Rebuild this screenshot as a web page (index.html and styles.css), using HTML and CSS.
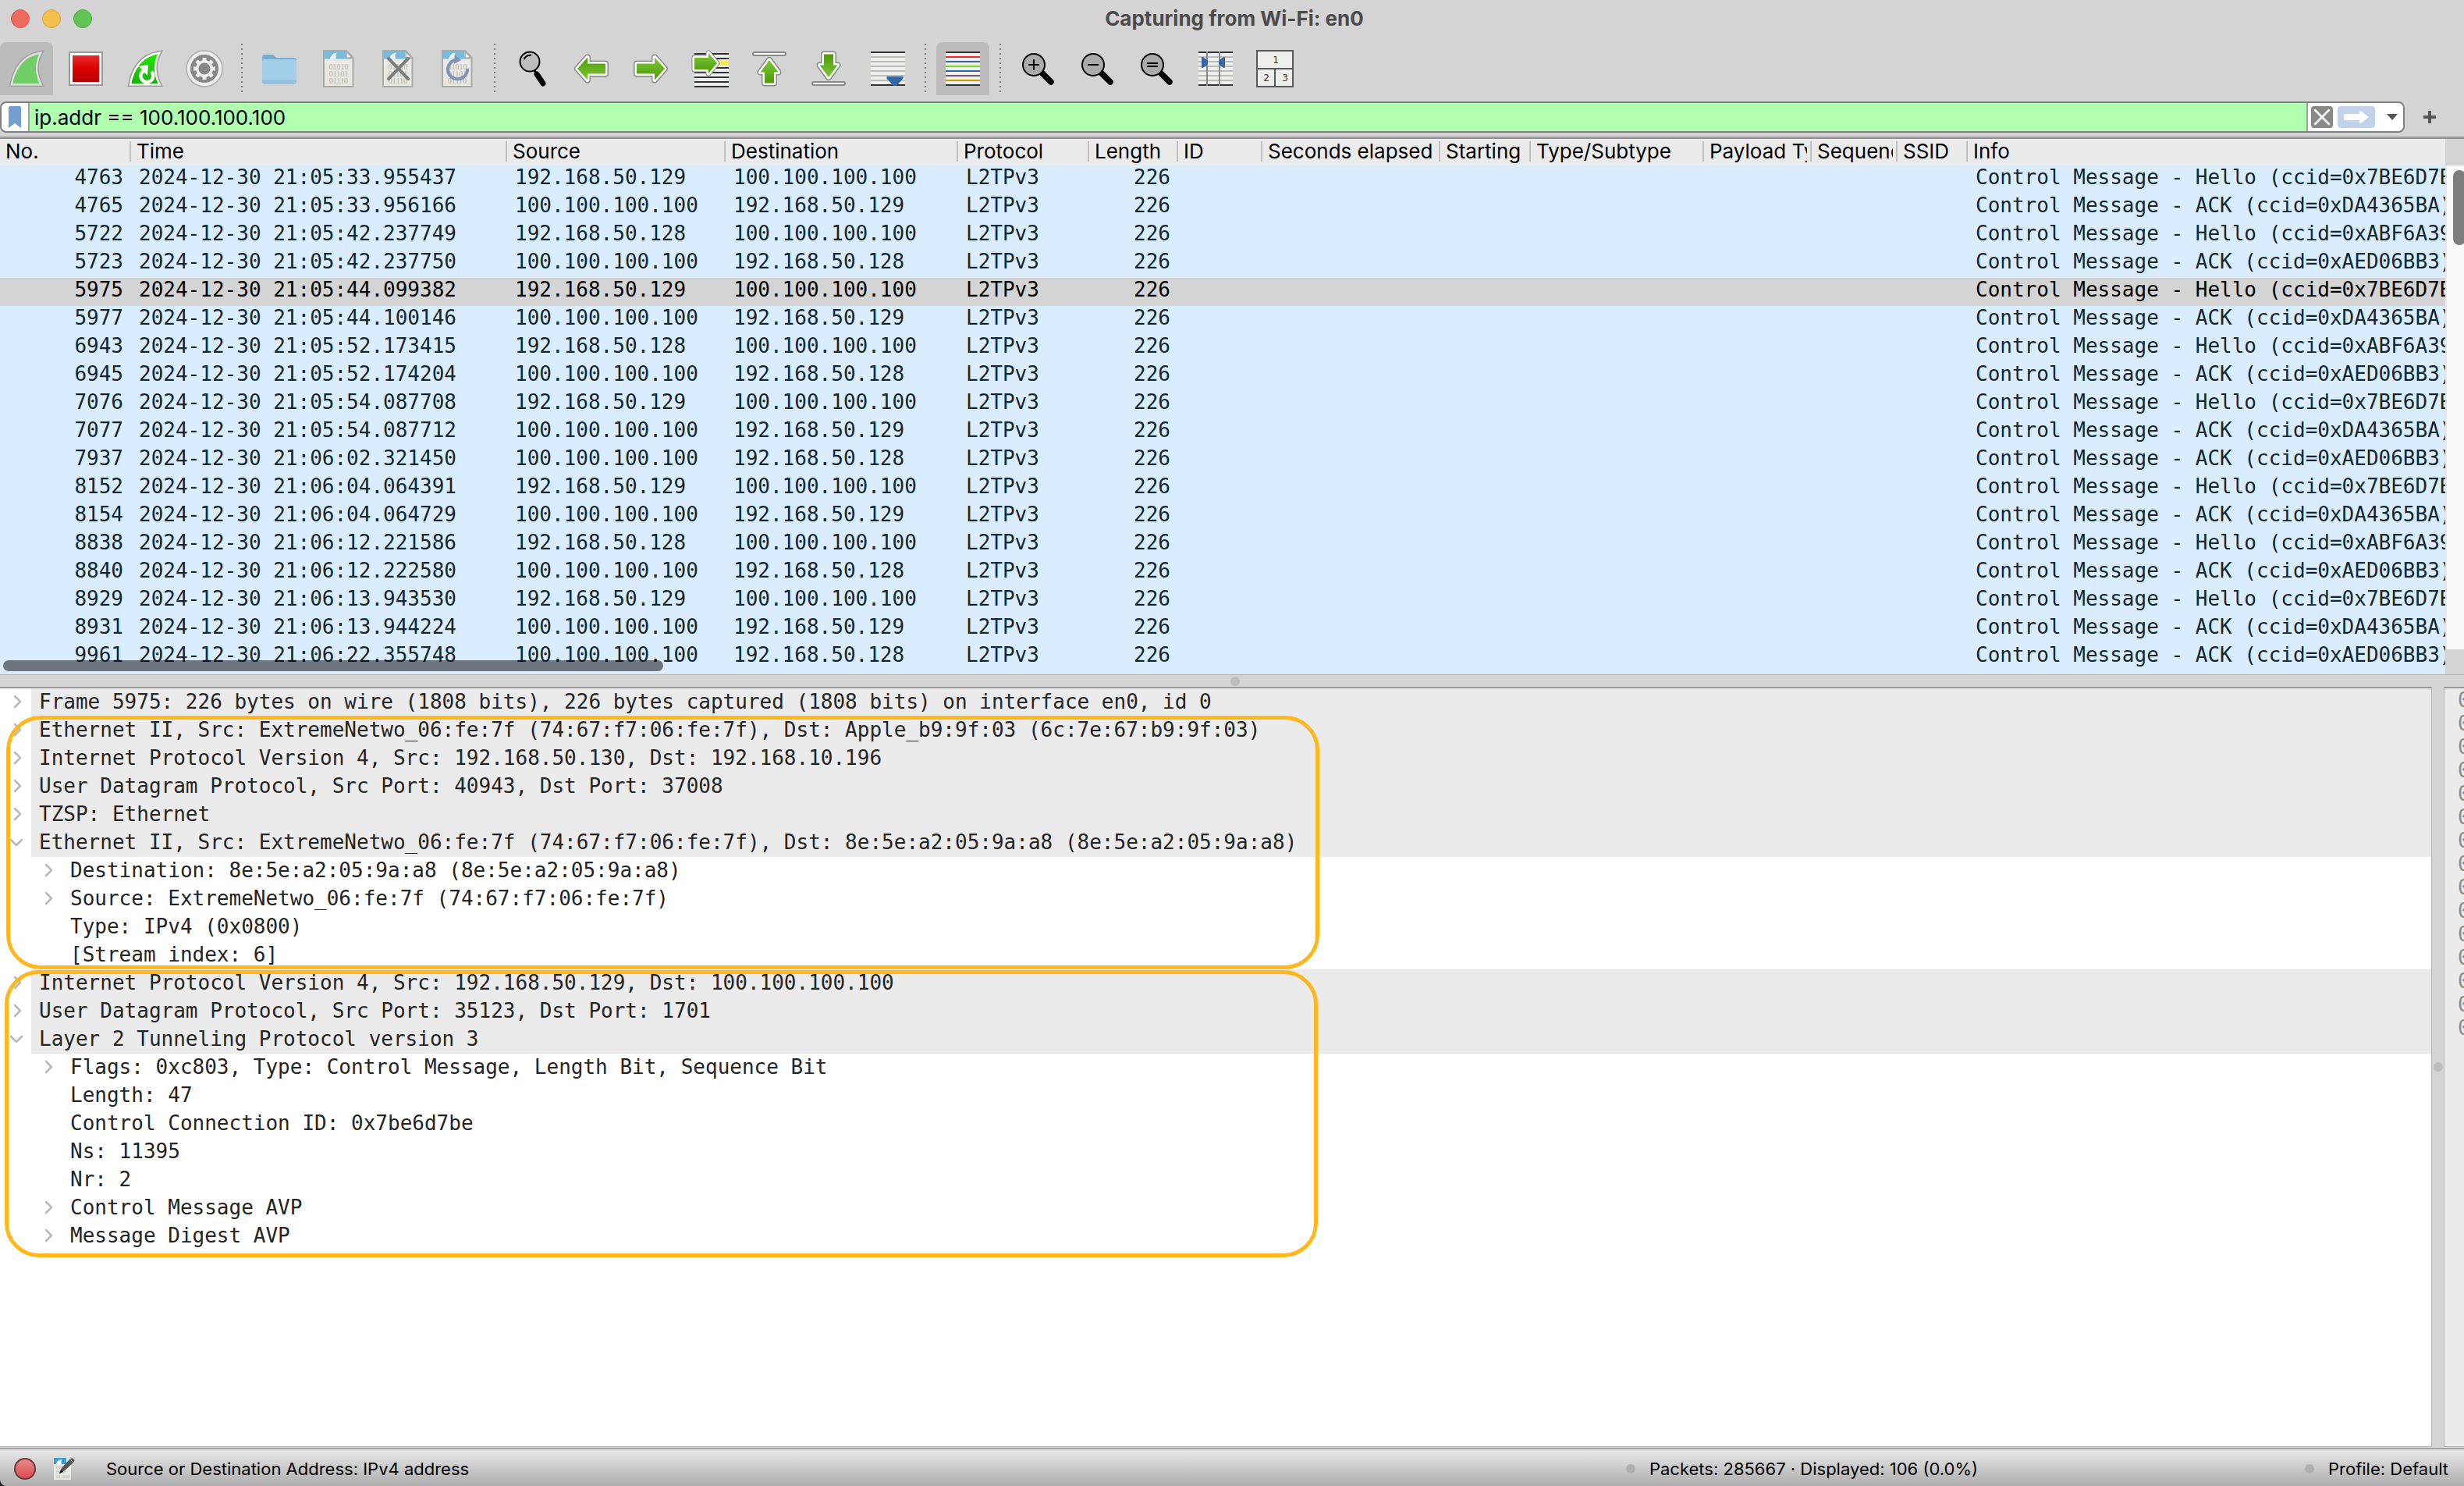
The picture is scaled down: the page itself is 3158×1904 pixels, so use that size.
FILE: index.html
```html
<!DOCTYPE html>
<html lang="en">
<head>
  <meta charset="UTF-8" />
  <title>Capturing from Wi-Fi: en0</title>
  <meta name="viewport" content="width=device-width, initial-scale=1.0" />
  <link rel="stylesheet" href="styles.css">
</head>
<body>

<!-- shared icon shapes -->
<svg class="sprite" aria-hidden="true">
  <defs>
    <linearGradient id="green" x1="0" y1="0" x2="0" y2="1">
      <stop offset="0" stop-color="#7cc83a" />
      <stop offset="1" stop-color="#4e9a06" />
    </linearGradient>
    <linearGradient id="red" x1="0" y1="0" x2="0" y2="1">
      <stop offset="0" stop-color="#e52a2a" />
      <stop offset="0.5" stop-color="#dc0000" />
      <stop offset="1" stop-color="#b60000" />
    </linearGradient>
    <linearGradient id="fin" x1="0" y1="0" x2="0" y2="1">
      <stop offset="0" stop-color="#22e600" />
      <stop offset="1" stop-color="#14b400" />
    </linearGradient>
    <linearGradient id="paper" x1="0" y1="0" x2="0" y2="1">
      <stop offset="0" stop-color="#ececec" />
      <stop offset="1" stop-color="#e6e6da" />
    </linearGradient>
  </defs>
  <symbol id="i-file" viewBox="0 0 48 48">
    <path d="M5 1H34L42.500 10V47H5Z" fill="url(#paper)" stroke="#a9aba7" stroke-width="2" />
    <path d="M6 2H33V10H41V11.500H6Z" fill="#79b9d9" />
    <path d="M13 11.500C14 7 17 4 22 3.500C20 6 20 9 21 11.500Z" fill="#eef3f5" />
    <path d="M34 2V10H41.500Z" fill="#f4f4f2" stroke="#a9aba7" stroke-width="1.500" />
    <g fill="#b3b3ae" font-family="Liberation Serif, serif" font-size="10" text-anchor="middle">
      <text x="24" y="25">01010</text>
      <text x="24" y="34">01101</text>
      <text x="24" y="43">01110</text>
    </g>
  </symbol>
  <symbol id="i-arrow" viewBox="0 0 48 48">
    <g stroke-linejoin="round">
      <path d="M42 24L29 9.500V17.500H6V30.500H29V38.500Z" fill="none" stroke="#888a85" stroke-width="8" />
      <path d="M42 24L29 9.500V17.500H6V30.500H29V38.500Z" fill="none" stroke="#fff" stroke-width="5" />
    </g>
    <path d="M42 24L29 9.500V17.500H6V30.500H29V38.500Z" fill="url(#green)" />
  </symbol>
  <symbol id="i-updown" viewBox="0 0 48 48">
    <rect x="3" y="3" width="42" height="4" rx="2" fill="#fff" stroke="#888a85" stroke-width="2" />
    <g stroke-linejoin="round">
      <path d="M24 13L12.500 28.500H18V42.500H30V28.500H35.500Z" fill="none" stroke="#888a85" stroke-width="8" />
      <path d="M24 13L12.500 28.500H18V42.500H30V28.500H35.500Z" fill="none" stroke="#fff" stroke-width="5" />
    </g>
    <path d="M24 13L12.500 28.500H18V42.500H30V28.500H35.500Z" fill="url(#green)" />
  </symbol>
  <symbol id="i-lens" viewBox="0 0 48 48">
    <path d="M30 30L41 41" stroke="#000" stroke-width="7.500" stroke-linecap="round" />
    <circle cx="19" cy="19" r="14" fill="#ababab" stroke="#000" stroke-width="2" />
  </symbol>
  <symbol id="i-closed" viewBox="0 0 18 18">
    <path d="M6 2L13 9L6 16" fill="none" stroke="#b9b9b9" stroke-width="2.500" stroke-linecap="round" stroke-linejoin="round" />
  </symbol>
  <symbol id="i-open" viewBox="0 0 18 18">
    <path d="M1 6L8 13L15 6" fill="none" stroke="#b9b9b9" stroke-width="2.500" stroke-linecap="round" stroke-linejoin="round" />
  </symbol>
</svg>

<header class="titlebar">
  <div class="lights">
    <button class="light light-close" aria-label="Close"></button>
    <button class="light light-min" aria-label="Minimize"></button>
    <button class="light light-max" aria-label="Zoom"></button>
  </div>
  <h1>Capturing from Wi-Fi: en0</h1>
</header>

<nav class="toolbar">
  <button class="tool pressed" aria-label="Start capture">
    <svg viewBox="0 0 48 48">
      <path d="M6.500 43C10 25 20 9 40 5.500C34 18 35 31 40.500 43Z" fill="none" stroke="#a0a0a0" stroke-width="8" />
      <path d="M6.500 43C10 25 20 9 40 5.500C34 18 35 31 40.500 43Z" fill="#6fcf66" stroke="#dedede" stroke-width="5" />
      <path d="M6.500 43C10 25 20 9 40 5.500C34 18 35 31 40.500 43Z" fill="#6fcf66" />
    </svg>
  </button>
  <button class="tool" aria-label="Stop capture">
    <svg viewBox="0 0 48 48">
      <rect x="3" y="3" width="42" height="42" fill="#fff" stroke="#999" stroke-width="2" />
      <rect x="7" y="7" width="34" height="34" fill="url(#red)" />
    </svg>
  </button>
  <button class="tool" aria-label="Restart capture">
    <svg viewBox="0 0 48 48">
      <path d="M6.500 43C10 25 20 9 40 5.500C34 18 35 31 40.500 43Z" fill="none" stroke="#999" stroke-width="8" />
      <path d="M6.500 43C10 25 20 9 40 5.500C34 18 35 31 40.500 43Z" fill="none" stroke="#fff" stroke-width="5" />
      <path d="M6.500 43C10 25 20 9 40 5.500C34 18 35 31 40.500 43Z" fill="url(#fin)" />
      <path d="M19.500 29A8 8 0 1 0 32 27.500" fill="none" stroke="#fff" stroke-width="4.500" />
      <path d="M15 21L28 19L27 33L23.500 29L19 32L17 29L20 25Z" fill="#fff" />
    </svg>
  </button>
  <button class="tool" aria-label="Capture options">
    <svg viewBox="0 0 48 48">
      <circle cx="24" cy="24" r="23" fill="#ededed" stroke="#acacac" stroke-width="1.500" />
      <circle cx="24" cy="24" r="18" fill="#868686" />
      <circle cx="24" cy="24" r="11" fill="#ededed" />
      <g stroke="#ededed" stroke-width="5">
        <path d="M24 10V38M10 24H38M14 14L34 34M34 14L14 34" />
      </g>
      <circle cx="24" cy="24" r="7.500" fill="#868686" />
    </svg>
  </button>
  <span class="sep"></span>
  <button class="tool" aria-label="Open file">
    <svg viewBox="0 0 48 48">
      <path d="M2 9Q2 6 5 6H15Q17 6 18.500 8.500L20 10H43Q46 10 46 13V20H2Z" fill="#74add0" />
      <path d="M2 14Q2 12 4 12H44Q46 12 46 14V41Q46 44 43 44H5Q2 44 2 41Z" fill="#a3d0e8" />
      <path d="M2 38V41Q2 44 5 44H43Q46 44 46 41V38Z" fill="#93c3de" />
    </svg>
  </button>
  <button class="tool" aria-label="Save file">
    <svg><use href="#i-file" /></svg>
  </button>
  <button class="tool" aria-label="Close file">
    <svg viewBox="0 0 48 48">
      <use href="#i-file" />
      <path d="M12 11L37 37M37 11L12 37" stroke="#7b7d7b" stroke-width="4" stroke-linecap="round" />
    </svg>
  </button>
  <button class="tool" aria-label="Reload file">
    <svg viewBox="0 0 48 48">
      <use href="#i-file" />
      <path d="M23 12.500A12.500 12.500 0 1 0 37 24" fill="none" stroke="#7f93b8" stroke-width="4" />
      <path d="M21 7L29 13L20 18Z" fill="#7f93b8" />
    </svg>
  </button>
  <span class="sep"></span>
  <button class="tool" aria-label="Find packet">
    <svg viewBox="0 0 48 48">
      <path d="M30 31L38 43" stroke="#000" stroke-width="7" stroke-linecap="round" />
      <path d="M26 25L30 31" stroke="#000" stroke-width="3" />
      <circle cx="21" cy="15" r="12.500" fill="#bdbdbd" stroke="#000" stroke-width="2" />
      <path d="M13.500 12Q16 6.500 23 6.500" fill="none" stroke="#000" stroke-width="2" />
    </svg>
  </button>
  <button class="tool" aria-label="Go back">
    <svg viewBox="0 0 48 48"><use href="#i-arrow" transform="rotate(180 24 24)" /></svg>
  </button>
  <button class="tool" aria-label="Go forward">
    <svg><use href="#i-arrow" /></svg>
  </button>
  <button class="tool" aria-label="Go to packet">
    <svg viewBox="0 0 48 48">
      <rect x="4" y="4" width="44" height="43" fill="#eeeeec" />
      <path d="M4 5H48M4 11H48M4 23H48M4 29H48M4 35H48M4 41H48M4 47H48" stroke="#2e3436" stroke-width="2" />
      <rect x="30" y="14" width="18" height="6" fill="#fce94f" />
      <g stroke-linejoin="round">
        <path d="M33 17L22 4V10H4V25H22V30Z" fill="none" stroke="#888a85" stroke-width="7" />
        <path d="M33 17L22 4V10H4V25H22V30Z" fill="none" stroke="#fff" stroke-width="5" />
      </g>
      <path d="M33 17L22 4V10H4V25H22V30Z" fill="url(#green)" />
    </svg>
  </button>
  <button class="tool" aria-label="Go to first packet">
    <svg><use href="#i-updown" /></svg>
  </button>
  <button class="tool" aria-label="Go to last packet">
    <svg viewBox="0 0 48 48"><use href="#i-updown" transform="rotate(180 24 24)" /></svg>
  </button>
  <button class="tool" aria-label="Auto scroll">
    <svg viewBox="0 0 48 48">
      <rect x="2" y="2" width="44" height="44" fill="#eeeeec" />
      <path d="M2 9H46M2 15H46M2 21H46M2 27H46M2 33H46M2 39H46" stroke="#babdb6" stroke-width="2" />
      <path d="M2 3H46M2 45H46" stroke="#2e3436" stroke-width="2" />
      <path d="M24 34H42Q45 34 43 37L36 45Q33 47 30 45L23 37Q21 34 24 34Z" fill="#3465a4" />
    </svg>
  </button>
  <span class="sep"></span>
  <button class="tool pressed" aria-label="Colorize packets">
    <svg viewBox="0 0 48 48">
      <rect x="2" y="2" width="44" height="44" fill="#eeeeec" />
      <g stroke-width="2">
        <path d="M2 3H46M2 45H46" stroke="#2e3436" />
        <path d="M2 9H46" stroke="#ef2929" />
        <path d="M2 15H46M2 27H46" stroke="#3465a4" />
        <path d="M2 21H46" stroke="#73d216" />
        <path d="M2 33H46" stroke="#75507b" />
        <path d="M2 39H46" stroke="#c4a000" />
      </g>
    </svg>
  </button>
  <span class="sep"></span>
  <button class="tool" aria-label="Zoom in">
    <svg viewBox="0 0 48 48">
      <use href="#i-lens" />
      <path d="M12 19H26M19 12V26" stroke="#000" stroke-width="2" />
    </svg>
  </button>
  <button class="tool" aria-label="Zoom out">
    <svg viewBox="0 0 48 48">
      <use href="#i-lens" />
      <path d="M12 19H26" stroke="#000" stroke-width="2" />
    </svg>
  </button>
  <button class="tool" aria-label="Normal size">
    <svg viewBox="0 0 48 48">
      <use href="#i-lens" />
      <path d="M12 17H26M12 21H26" stroke="#000" stroke-width="2" />
    </svg>
  </button>
  <button class="tool" aria-label="Resize columns">
    <svg viewBox="0 0 48 48">
      <rect x="2" y="2" width="44" height="44" fill="#eeeeec" />
      <path d="M2 9H46M2 15H46M2 21H46M2 27H46M2 33H46M2 39H46" stroke="#babdb6" stroke-width="2" />
      <path d="M2 3H46M2 45H46" stroke="#2e3436" stroke-width="2" />
      <path d="M13 2V46M29 2V46" stroke="#888a85" stroke-width="2" />
      <path d="M6 9Q9 9 14 14V18Q9 23 6 23ZM36 9Q33 9 28 14V18Q33 23 36 23Z" fill="#3465a4" />
    </svg>
  </button>
  <button class="tool" aria-label="Layout">
    <svg viewBox="0 0 48 48">
      <path d="M1 1H47V47H1ZM1 24H47M24 24V47" fill="#eeeeec" stroke="#555a5c" stroke-width="2" />
      <g fill="#2e3436" font-family="DejaVu Sans, sans-serif" font-size="12" text-anchor="middle">
        <text x="25" y="17">1</text>
        <text x="13" y="40">2</text>
        <text x="37" y="40">3</text>
      </g>
    </svg>
  </button>
</nav>

<form class="filterbar">
  <div class="filter">
    <button type="button" class="bookmark" aria-label="Bookmarks">
      <svg viewBox="0 0 16 28"><path d="M0 2Q0 0 2 0H14Q16 0 16 2V28L8 22L0 28Z" fill="#729fcf" /></svg>
    </button>
    <input type="text" class="filter-text" aria-label="Display filter" value="ip.addr == 100.100.100.100">
    <button type="button" class="clear" aria-label="Clear filter">
      <svg viewBox="0 0 28 28"><path d="M5 5L23 23M23 5L5 23" stroke="#fff" stroke-width="2.500" stroke-linecap="round" /></svg>
    </button>
    <button type="submit" class="apply" aria-label="Apply filter">
      <svg viewBox="0 0 48 28"><path d="M9 10H28V7Q29 5 31 7L40 14L31 21Q29 23 28 21V18H9Q8 18 8 17V11Q8 10 9 10Z" fill="#fff" /></svg>
    </button>
    <button type="button" class="history" aria-label="Filter history">
      <svg viewBox="0 0 14 8"><path d="M0 0H14L7 8Z" fill="#555" /></svg>
    </button>
  </div>
  <button type="button" class="add" aria-label="Add filter button">
    <svg viewBox="0 0 16 16"><path d="M8 0V16M0 8H16" stroke="#555" stroke-width="4" /></svg>
  </button>
</form>

<main>
  <section class="packets">
    <div class="packets-view">
      <table>
        <colgroup>
          <col class="c-no"><col class="c-time"><col class="c-src"><col class="c-dst"><col class="c-proto"><col class="c-len"><col class="c-id">
          <col class="c-sec"><col class="c-start"><col class="c-type"><col class="c-pay"><col class="c-seq"><col class="c-ssid"><col>
        </colgroup>
        <thead>
          <tr>
            <th>No.</th><th>Time</th><th>Source</th><th>Destination</th><th>Protocol</th><th>Length</th><th>ID</th>
            <th>Seconds elapsed</th><th>Starting</th><th>Type/Subtype</th><th><div>Payload Ty</div></th><th><div>Sequenc</div></th><th>SSID</th><th>Info</th>
          </tr>
        </thead>
        <tbody>
          <tr><td class="num">4763</td><td>2024-12-30 21:05:33.955437</td><td>192.168.50.129</td><td>100.100.100.100</td><td>L2TPv3</td><td class="num">226</td><td colspan="7"></td><td>Control Message - Hello (ccid=0x7BE6D7BE)</td></tr>
          <tr><td class="num">4765</td><td>2024-12-30 21:05:33.956166</td><td>100.100.100.100</td><td>192.168.50.129</td><td>L2TPv3</td><td class="num">226</td><td colspan="7"></td><td>Control Message - ACK (ccid=0xDA4365BA)</td></tr>
          <tr><td class="num">5722</td><td>2024-12-30 21:05:42.237749</td><td>192.168.50.128</td><td>100.100.100.100</td><td>L2TPv3</td><td class="num">226</td><td colspan="7"></td><td>Control Message - Hello (ccid=0xABF6A39</td></tr>
          <tr><td class="num">5723</td><td>2024-12-30 21:05:42.237750</td><td>100.100.100.100</td><td>192.168.50.128</td><td>L2TPv3</td><td class="num">226</td><td colspan="7"></td><td>Control Message - ACK (ccid=0xAED06BB3)</td></tr>
          <tr class="selected"><td class="num">5975</td><td>2024-12-30 21:05:44.099382</td><td>192.168.50.129</td><td>100.100.100.100</td><td>L2TPv3</td><td class="num">226</td><td colspan="7"></td><td>Control Message - Hello (ccid=0x7BE6D7BE)</td></tr>
          <tr><td class="num">5977</td><td>2024-12-30 21:05:44.100146</td><td>100.100.100.100</td><td>192.168.50.129</td><td>L2TPv3</td><td class="num">226</td><td colspan="7"></td><td>Control Message - ACK (ccid=0xDA4365BA)</td></tr>
          <tr><td class="num">6943</td><td>2024-12-30 21:05:52.173415</td><td>192.168.50.128</td><td>100.100.100.100</td><td>L2TPv3</td><td class="num">226</td><td colspan="7"></td><td>Control Message - Hello (ccid=0xABF6A39</td></tr>
          <tr><td class="num">6945</td><td>2024-12-30 21:05:52.174204</td><td>100.100.100.100</td><td>192.168.50.128</td><td>L2TPv3</td><td class="num">226</td><td colspan="7"></td><td>Control Message - ACK (ccid=0xAED06BB3)</td></tr>
          <tr><td class="num">7076</td><td>2024-12-30 21:05:54.087708</td><td>192.168.50.129</td><td>100.100.100.100</td><td>L2TPv3</td><td class="num">226</td><td colspan="7"></td><td>Control Message - Hello (ccid=0x7BE6D7BE)</td></tr>
          <tr><td class="num">7077</td><td>2024-12-30 21:05:54.087712</td><td>100.100.100.100</td><td>192.168.50.129</td><td>L2TPv3</td><td class="num">226</td><td colspan="7"></td><td>Control Message - ACK (ccid=0xDA4365BA)</td></tr>
          <tr><td class="num">7937</td><td>2024-12-30 21:06:02.321450</td><td>100.100.100.100</td><td>192.168.50.128</td><td>L2TPv3</td><td class="num">226</td><td colspan="7"></td><td>Control Message - ACK (ccid=0xAED06BB3)</td></tr>
          <tr><td class="num">8152</td><td>2024-12-30 21:06:04.064391</td><td>192.168.50.129</td><td>100.100.100.100</td><td>L2TPv3</td><td class="num">226</td><td colspan="7"></td><td>Control Message - Hello (ccid=0x7BE6D7BE)</td></tr>
          <tr><td class="num">8154</td><td>2024-12-30 21:06:04.064729</td><td>100.100.100.100</td><td>192.168.50.129</td><td>L2TPv3</td><td class="num">226</td><td colspan="7"></td><td>Control Message - ACK (ccid=0xDA4365BA)</td></tr>
          <tr><td class="num">8838</td><td>2024-12-30 21:06:12.221586</td><td>192.168.50.128</td><td>100.100.100.100</td><td>L2TPv3</td><td class="num">226</td><td colspan="7"></td><td>Control Message - Hello (ccid=0xABF6A39</td></tr>
          <tr><td class="num">8840</td><td>2024-12-30 21:06:12.222580</td><td>100.100.100.100</td><td>192.168.50.128</td><td>L2TPv3</td><td class="num">226</td><td colspan="7"></td><td>Control Message - ACK (ccid=0xAED06BB3)</td></tr>
          <tr><td class="num">8929</td><td>2024-12-30 21:06:13.943530</td><td>192.168.50.129</td><td>100.100.100.100</td><td>L2TPv3</td><td class="num">226</td><td colspan="7"></td><td>Control Message - Hello (ccid=0x7BE6D7BE)</td></tr>
          <tr><td class="num">8931</td><td>2024-12-30 21:06:13.944224</td><td>100.100.100.100</td><td>192.168.50.129</td><td>L2TPv3</td><td class="num">226</td><td colspan="7"></td><td>Control Message - ACK (ccid=0xDA4365BA)</td></tr>
          <tr><td class="num">9961</td><td>2024-12-30 21:06:22.355748</td><td>100.100.100.100</td><td>192.168.50.128</td><td>L2TPv3</td><td class="num">226</td><td colspan="7"></td><td>Control Message - ACK (ccid=0xAED06BB3)</td></tr>
        </tbody>
      </table>
      <div class="hthumb"></div>
    </div>
    <div class="vscroll">
      <div class="vtrack"><div class="vthumb"></div></div>
    </div>
  </section>

  <div class="split-h"><span class="grip"></span></div>

  <section class="panes">
    <div class="tree">
      <div class="node top"><button class="twist" aria-label="Expand"><svg><use href="#i-closed" /></svg></button><span>Frame 5975: 226 bytes on wire (1808 bits), 226 bytes captured (1808 bits) on interface en0, id 0</span></div>
      <div class="node top"><button class="twist" aria-label="Expand"><svg><use href="#i-closed" /></svg></button><span>Ethernet II, Src: ExtremeNetwo_06:fe:7f (74:67:f7:06:fe:7f), Dst: Apple_b9:9f:03 (6c:7e:67:b9:9f:03)</span></div>
      <div class="node top"><button class="twist" aria-label="Expand"><svg><use href="#i-closed" /></svg></button><span>Internet Protocol Version 4, Src: 192.168.50.130, Dst: 192.168.10.196</span></div>
      <div class="node top"><button class="twist" aria-label="Expand"><svg><use href="#i-closed" /></svg></button><span>User Datagram Protocol, Src Port: 40943, Dst Port: 37008</span></div>
      <div class="node top"><button class="twist" aria-label="Expand"><svg><use href="#i-closed" /></svg></button><span>TZSP: Ethernet</span></div>
      <div class="node top"><button class="twist" aria-label="Collapse"><svg><use href="#i-open" /></svg></button><span>Ethernet II, Src: ExtremeNetwo_06:fe:7f (74:67:f7:06:fe:7f), Dst: 8e:5e:a2:05:9a:a8 (8e:5e:a2:05:9a:a8)</span></div>
      <div class="node child"><button class="twist" aria-label="Expand"><svg><use href="#i-closed" /></svg></button><span>Destination: 8e:5e:a2:05:9a:a8 (8e:5e:a2:05:9a:a8)</span></div>
      <div class="node child"><button class="twist" aria-label="Expand"><svg><use href="#i-closed" /></svg></button><span>Source: ExtremeNetwo_06:fe:7f (74:67:f7:06:fe:7f)</span></div>
      <div class="node leaf"><span>Type: IPv4 (0x0800)</span></div>
      <div class="node leaf"><span>[Stream index: 6]</span></div>
      <div class="node top"><button class="twist" aria-label="Expand"><svg><use href="#i-closed" /></svg></button><span>Internet Protocol Version 4, Src: 192.168.50.129, Dst: 100.100.100.100</span></div>
      <div class="node top"><button class="twist" aria-label="Expand"><svg><use href="#i-closed" /></svg></button><span>User Datagram Protocol, Src Port: 35123, Dst Port: 1701</span></div>
      <div class="node top"><button class="twist" aria-label="Collapse"><svg><use href="#i-open" /></svg></button><span>Layer 2 Tunneling Protocol version 3</span></div>
      <div class="node child"><button class="twist" aria-label="Expand"><svg><use href="#i-closed" /></svg></button><span>Flags: 0xc803, Type: Control Message, Length Bit, Sequence Bit</span></div>
      <div class="node leaf"><span>Length: 47</span></div>
      <div class="node leaf"><span>Control Connection ID: 0x7be6d7be</span></div>
      <div class="node leaf"><span>Ns: 11395</span></div>
      <div class="node leaf"><span>Nr: 2</span></div>
      <div class="node child"><button class="twist" aria-label="Expand"><svg><use href="#i-closed" /></svg></button><span>Control Message AVP</span></div>
      <div class="node child"><button class="twist" aria-label="Expand"><svg><use href="#i-closed" /></svg></button><span>Message Digest AVP</span></div>

      <!-- highlight frames over the tree -->
      <div class="mark mark-outer"></div>
      <div class="mark mark-inner"></div>
    </div>

    <div class="split-v"><span class="grip"></span></div>

    <div class="bytes">
      <div>0000</div><div>0010</div><div>0020</div><div>0030</div><div>0040</div>
      <div>0050</div><div>0060</div><div>0070</div><div>0080</div><div>0090</div>
      <div>00a0</div><div>00b0</div><div>00c0</div><div>00d0</div><div>00e0</div>
    </div>
  </section>
</main>

<footer class="status-wrap">
  <div class="status">
    <button class="expert" aria-label="Expert information"></button>
    <button class="comment" aria-label="Capture comment">
      <svg viewBox="0 0 28 28">
        <path d="M1 0H23V28H1Z" fill="#e9e9e4" />
        <path d="M1 0H17V8H1Z" fill="#3a9fd3" />
        <path d="M4 8C5 4 8 2 11 2C10 4 10 6 11 8Z" fill="#fff" />
        <g fill="#b5b5b0" font-family="Liberation Serif, serif" font-size="6">
          <text x="4" y="14">0101</text>
          <text x="4" y="20">0110</text>
          <text x="4" y="26">011100</text>
        </g>
        <path d="M8 20L11 13L22 1Q25 -1 27 2Q28 4 26 6L14 17Z" fill="#555753" />
        <path d="M8 20L10 15L13 18Z" fill="#111" />
        <path d="M22 2L26 6" stroke="#ddd" stroke-width="1" />
      </svg>
    </button>
    <span class="status-left">Source or Destination Address: IPv4 address</span>
    <span class="status-packets"><i class="grip"></i>Packets: 285667 · Displayed: 106 (0.0%)</span>
    <span class="status-profile"><i class="grip"></i>Profile: Default</span>
  </div>
</footer>

</body>
</html>
```
FILE: styles.css
```css
* {
  box-sizing: border-box;
}

body {
  margin: 0;
  height: 100vh;
  display: flex;
  flex-direction: column;
  overflow: hidden;
  background: #d4d4d4;
  color: #000;
  font-family: Inter, "Liberation Sans", sans-serif;
  font-size: 26px;
}

button {
  display: flex;
  align-items: center;
  justify-content: center;
  padding: 0;
  border: none;
  background: none;
}

svg {
  display: block;
}

.sprite {
  position: absolute;
  width: 0;
  height: 0;
}

/* title bar */
.titlebar {
  display: grid;
  grid-template-columns: 1fr auto 1fr;
  align-items: center;
  height: 48px;
  padding: 0 8px 0 14px;
}

.lights {
  display: flex;
  gap: 16px;
}

.light {
  width: 24px;
  height: 24px;
  border-radius: 50%;
}

.light-close {
  background: #ed6a5f;
  border: 1px solid #d9574c;
}

.light-min {
  background: #f5bf4f;
  border: 1px solid #d9a23c;
}

.light-max {
  background: #61c554;
  border: 1px solid #4fab43;
}

.titlebar h1 {
  margin: 0;
  font-size: 26px;
  line-height: 32px;
  font-weight: 700;
  color: #4b4b4b;
}

/* toolbar */
.toolbar {
  display: flex;
  gap: 8px;
  padding: 6px 0 8px;
}

.tool {
  width: 68px;
  height: 68px;
}

.tool svg {
  width: 48px;
  height: 48px;
}

.tool.pressed {
  background: #bcbcbc;
  border-radius: 8px 8px 0 0;
}

.sep {
  width: 12px;
  margin: 2px 0;
  background: repeating-linear-gradient(#7a7a7a 0 2px, transparent 2px 6px) no-repeat center / 2px 100%;
}

/* display filter */
.filterbar {
  display: flex;
  align-items: center;
  gap: 24px;
  height: 44px;
  padding: 0 36px 4px 0;
}

.filter {
  flex: 1;
  display: flex;
  align-items: center;
  height: 40px;
  border: 2px solid #808080;
  border-radius: 8px;
  background: #fff;
  overflow: hidden;
}

.bookmark {
  width: 34px;
  height: 36px;
}

.bookmark svg {
  width: 16px;
  height: 28px;
}

.filter-text {
  flex: 1;
  height: 36px;
  padding: 0 6px;
  border: none;
  border-left: 2px solid #a0a0a0;
  border-right: 2px solid #a0a0a0;
  border-radius: 0;
  background: #afffaf;
  color: #000;
  font: inherit;
  outline: none;
}

.clear {
  width: 28px;
  height: 28px;
  margin: 0 6px 0 4px;
  border-radius: 4px;
  background: #888a85;
}

.apply {
  width: 48px;
  height: 28px;
  border-radius: 4px;
  background: #c0d3eb;
}

.history {
  width: 36px;
  height: 28px;
  padding-left: 8px;
}

.history svg {
  width: 14px;
  height: 8px;
}

.add svg {
  width: 16px;
  height: 16px;
}

/* packet list */
main {
  flex: 1;
  display: flex;
  flex-direction: column;
  min-height: 0;
  border-top: 2px solid #bdbdbd;
}

.packets {
  display: flex;
  border-top: 2px solid #909090;
}

.packets-view {
  position: relative;
  flex: 1;
  height: 686px;
  overflow: hidden;
  background: #daedff;
}

table {
  width: 100%;
  table-layout: fixed;
  border-collapse: collapse;
}

.c-no { width: 168px; }
.c-time { width: 482px; }
.c-src { width: 280px; }
.c-dst { width: 298px; }
.c-proto { width: 168px; }
.c-len { width: 114px; }
.c-id { width: 108px; }
.c-sec { width: 228px; }
.c-start { width: 116px; }
.c-type { width: 222px; }
.c-pay { width: 138px; }
.c-seq { width: 110px; }
.c-ssid { width: 90px; }

th {
  height: 34px;
  padding: 0 6px 2px 7px;
  text-align: left;
  font-weight: 400;
  line-height: 32px;
  white-space: nowrap;
  background: linear-gradient(#c0c0c0, #c0c0c0) no-repeat right 3px / 2px 26px #ebebeb;
}

th:last-child {
  background: #ebebeb;
}

th div {
  overflow: hidden;
}

td {
  height: 36px;
  padding: 0 0 6px 10px;
  font-family: "DejaVu Sans Mono", "Liberation Mono", monospace;
  font-size: 26px;
  line-height: 30px;
  white-space: nowrap;
  overflow: hidden;
  color: #12272e;
}

td.num {
  padding-right: 10px;
  text-align: right;
}

tr.selected td {
  background: #d4d4d4;
  color: #000;
}

.hthumb {
  position: absolute;
  left: 4px;
  bottom: 4px;
  width: 27%;
  height: 14px;
  border-radius: 7px;
  background: rgba(0, 0, 0, 0.5);
}

.vscroll {
  width: 24px;
  padding: 34px 0 32px;
}

.vtrack {
  height: 100%;
  padding: 6px 0 0 8px;
  border-left: 2px solid #e8e8e8;
  background: #fafafa;
  overflow: hidden;
}

.vthumb {
  width: 16px;
  height: 96px;
  border-radius: 8px;
  background: #7d7d7d;
}

/* splitters */
.grip {
  width: 12px;
  height: 12px;
  border-radius: 50%;
  background: #bdbdbd;
}

.split-h {
  display: flex;
  align-items: center;
  justify-content: center;
  height: 16px;
  padding-left: 8px;
  border-top: 1px solid #b0b0b0;
}

.split-v {
  display: flex;
  align-items: center;
  justify-content: center;
  width: 15px;
}

/* packet details */
.panes {
  flex: 1;
  display: flex;
  min-height: 0;
}

.tree {
  position: relative;
  flex: 1;
  border: 1px solid #b5b5b5;
  border-top: 2px solid #999;
  border-left: none;
  background: #fff;
  overflow: hidden;
}

.node {
  display: flex;
  height: 36px;
  font-family: "DejaVu Sans Mono", "Liberation Mono", monospace;
  line-height: 34px;
  white-space: nowrap;
  color: #242424;
}

.node span {
  flex: 1;
  padding-left: 10px;
}

.node.top span {
  background: #ebebeb;
}

.node.child {
  padding-left: 40px;
}

.node.leaf {
  padding-left: 80px;
}

.twist {
  width: 40px;
  height: 34px;
  padding-left: 4px;
}

.twist svg {
  width: 18px;
  height: 18px;
}

.mark {
  position: absolute;
  border: 5px solid #ffb71b;
  border-radius: 44px;
}

.mark-outer {
  left: 8px;
  top: 35px;
  width: 1683px;
  height: 325px;
}

.mark-inner {
  left: 6px;
  top: 361px;
  width: 1683px;
  height: 368px;
}

/* packet bytes */
.bytes {
  width: 26px;
  padding-left: 17px;
  border: 1px solid #b5b5b5;
  border-top: 2px solid #999;
  border-right: none;
  background: #ebebeb;
  font-family: "DejaVu Sans Mono", "Liberation Mono", monospace;
  line-height: 30px;
  color: #8c8c8c;
  overflow: hidden;
}

/* status bar */
.status-wrap {
  margin-top: 2px;
  background: #1c1c1c;
}

.status {
  display: flex;
  align-items: center;
  height: 48px;
  padding: 2px 20px 0 18px;
  border-top: 1px solid #6d6d6d;
  border-bottom-left-radius: 8px;
  background: linear-gradient(#e9e9e9, #adadad);
  font-size: 22px;
}

.status .grip {
  background: #b0b0b0;
}

.expert {
  width: 28px;
  height: 28px;
  border: 2px solid #6b3a3c;
  border-radius: 50%;
  background: linear-gradient(#ea8a8a, #d94c4c);
}

.comment {
  margin: 0 40px 0 22px;
}

.comment svg {
  width: 28px;
  height: 28px;
}

.status-left {
  flex: 1;
}

.status-packets,
.status-profile {
  display: flex;
  align-items: center;
  gap: 18px;
}

.status-packets {
  width: 870px;
}
```
